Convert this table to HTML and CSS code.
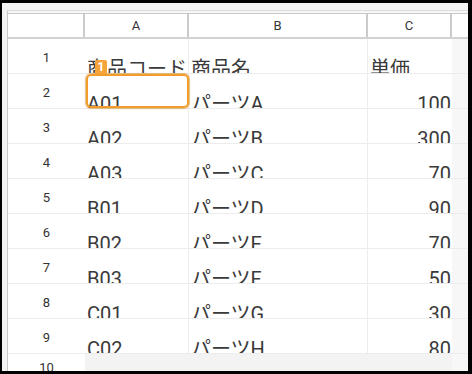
FILE: index.html
```html
<!DOCTYPE html>
<html lang="ja">
<head>
    <meta charset="UTF-8">
    <title>商品マスタ</title>
    <link rel="stylesheet" href="styles.css">
</head>
<body>
    <div class="frame">
        <div class="sheet">
            <div class="col-header">
                <div class="hcell"></div>
                <div class="hcell">A</div>
                <div class="hcell">B</div>
                <div class="hcell">C</div>
                <div class="hfill"></div>
            </div>

            <div class="row">
                <div class="num">1</div>
                <div class="cell">商品コード</div>
                <div class="cell">商品名</div>
                <div class="cell">単価</div>
            </div>
            <div class="row">
                <div class="num">2</div>
                <div class="cell">A01</div>
                <div class="cell">パーツA</div>
                <div class="cell right">100</div>
            </div>
            <div class="row">
                <div class="num">3</div>
                <div class="cell">A02</div>
                <div class="cell">パーツB</div>
                <div class="cell right">300</div>
            </div>
            <div class="row">
                <div class="num">4</div>
                <div class="cell">A03</div>
                <div class="cell">パーツC</div>
                <div class="cell right">70</div>
            </div>
            <div class="row">
                <div class="num">5</div>
                <div class="cell">B01</div>
                <div class="cell">パーツD</div>
                <div class="cell right">90</div>
            </div>
            <div class="row">
                <div class="num">6</div>
                <div class="cell">B02</div>
                <div class="cell">パーツE</div>
                <div class="cell right">70</div>
            </div>
            <div class="row">
                <div class="num">7</div>
                <div class="cell">B03</div>
                <div class="cell">パーツF</div>
                <div class="cell right">50</div>
            </div>
            <div class="row">
                <div class="num">8</div>
                <div class="cell">C01</div>
                <div class="cell">パーツG</div>
                <div class="cell right">30</div>
            </div>
            <div class="row">
                <div class="num">9</div>
                <div class="cell">C02</div>
                <div class="cell">パーツH</div>
                <div class="cell right">80</div>
            </div>
            <div class="row last">
                <div class="num">10</div>
                <div class="cell empty"></div>
                <div class="cell empty"></div>
                <div class="cell empty"></div>
            </div>

            <div class="selection"></div>
            <div class="badge">1</div>
        </div>
    </div>
</body>
</html>
```

FILE: styles.css
```css
html, body {
    margin: 0;
    height: 100%;
}

body {
    background: #000;
    font-family: Roboto, "Noto Sans CJK JP", sans-serif;
    color: #3a3a3a;
    padding: 3px 4px 3px 2px;
    box-sizing: border-box;
}

.frame {
    height: 368px;
    background: #f3f3f3;
    overflow: hidden;
}

.sheet {
    position: relative;
    margin: 7px 0 0 5px;
    padding-top: 2px;
    border-top: 1px solid #dcdcdc;
    border-left: 1px solid #c9c9c9;
    background: #f7f7f7;
    height: 100%;
}

.col-header {
    display: grid;
    grid-template-columns: 77px 104px 179px 84px 1fr;
    height: 26px;
    box-sizing: border-box;
    border-top: 1px solid #c9c9c9;
    border-bottom: 2px solid #d2d2d2;
    background: #fff;
}

.hcell {
    border-right: 2px solid #cbcbcb;
    text-align: center;
    font-size: 13px;
    line-height: 23px;
    color: #333;
}

.row {
    display: grid;
    grid-template-columns: 77px 104px 179px 84px;
    height: 35px;
    box-sizing: border-box;
    border-bottom: 1px solid #ececec;
}

.num {
    background: #fff;
    text-align: center;
    font-size: 13px;
    line-height: 16px;
    padding-top: 11px;
    color: #333;
}

.cell {
    background: #fff;
    padding: 18px 2px 0;
    font-size: 20px;
    line-height: 24px;
    white-space: nowrap;
    overflow: hidden;
    border-right: 1px solid #ececec;
}

.cell:last-child {
    border-right: none;
}

.cell.right {
    text-align: right;
    padding-right: 1px;
}

.row.last .num {
    padding-top: 6px;
}

.cell.empty {
    background: #f3f3f3;
    border-right: none;
}

.selection {
    position: absolute;
    left: 78px;
    top: 63px;
    width: 103px;
    height: 34px;
    box-sizing: border-box;
    border: 2px solid #f09d2c;
    border-radius: 5px;
    box-shadow: 0 0 1px 1px rgba(214, 134, 36, 0.55);
}

.badge {
    position: absolute;
    left: 87px;
    top: 49px;
    width: 12px;
    height: 14px;
    background: #f5a43a;
    border-radius: 2px 2px 0 0;
    color: #fff;
    font-size: 12px;
    font-weight: bold;
    line-height: 14px;
    text-align: center;
}
```
